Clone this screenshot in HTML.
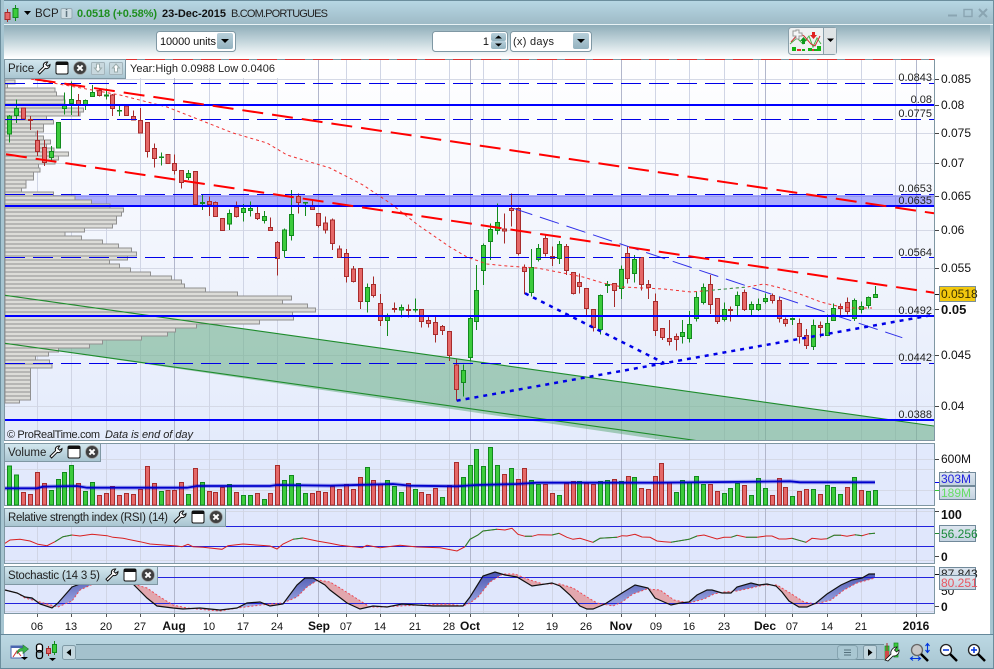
<!DOCTYPE html>
<html><head><meta charset="utf-8"><title>BCP</title>
<style>
html,body{margin:0;padding:0;background:#fff;width:994px;height:669px;overflow:hidden}
svg{display:block;font-family:"Liberation Sans",Arial,sans-serif;font-size:11px;fill:#111}
.rw{stroke:#a52a2a;stroke-width:3;fill:none}
.gw{stroke:#128a1e;stroke-width:3;fill:none}
.rb{stroke:#a82c2c;stroke-width:3;fill:#e56868}
.gb{stroke:#128a1e;stroke-width:3;fill:#3ccb3c}
.c{shape-rendering:crispEdges}
.ax{font-size:12px;fill:#111}
.lb{font-size:11px;text-anchor:end;fill:#222}
.dt{font-size:11px;text-anchor:middle}
.dm{font-size:12px;font-weight:bold;text-anchor:middle}
.tag{fill:url(#tg);stroke:#71899a;stroke-width:1}
</style></head><body>
<svg width="994" height="669" viewBox="0 0 994 669" xmlns="http://www.w3.org/2000/svg">
<defs>
<linearGradient id="tb" x1="0" y1="0" x2="0" y2="1"><stop offset="0" stop-color="#b8d8e5"/><stop offset="1" stop-color="#9db9c5"/></linearGradient>
<linearGradient id="tb2" x1="0" y1="0" x2="0" y2="1"><stop offset="0" stop-color="#8fadb9"/><stop offset=".5" stop-color="#c4d6dc"/><stop offset="1" stop-color="#fff"/></linearGradient>
<linearGradient id="pb" x1="0" y1="0" x2="0" y2="1"><stop offset="0" stop-color="#fff"/><stop offset="1" stop-color="#e4ebfb"/></linearGradient>
<linearGradient id="hd" x1="0" y1="0" x2="0" y2="1"><stop offset="0" stop-color="#d4e8ef"/><stop offset="1" stop-color="#a8c4d0"/></linearGradient>
<linearGradient id="tg" x1="0" y1="0" x2="0" y2="1"><stop offset="0" stop-color="#dde6ef"/><stop offset="1" stop-color="#c3d2e0"/></linearGradient>
<linearGradient id="btn" x1="0" y1="0" x2="0" y2="1"><stop offset="0" stop-color="#b8d0db"/><stop offset="1" stop-color="#93b2bf"/></linearGradient>
<linearGradient id="bt" x1="0" y1="0" x2="0" y2="1"><stop offset="0" stop-color="#bcd8e3"/><stop offset="1" stop-color="#a8c6d2"/></linearGradient>
<linearGradient id="bl" gradientUnits="userSpaceOnUse" x1="0" y1="572" x2="0" y2="610"><stop offset="0" stop-color="#4a55b0"/><stop offset="1" stop-color="#aab4ea"/></linearGradient>
<symbol id="wr" viewBox="0 0 14 14"><path d="M1 11.2L2.6 13L8.2 7.4C10.4 8.2 13 6.6 13 3.6L10.8 5.2L8.9 3.6L10.6 1C7.6 .6 5.6 3.2 6.6 5.6Z" fill="#fff" stroke="#111" stroke-width="1"/></symbol>
<symbol id="wn" viewBox="0 0 14 14"><rect x="1" y="1" width="12" height="12" rx="1.5" fill="#fff" stroke="#111"/><rect x="1" y="1" width="12" height="3" fill="#111"/></symbol>
<symbol id="cl" viewBox="0 0 14 14"><circle cx="7" cy="7" r="6.4" fill="#3f3f3f" stroke="#999" stroke-width=".7"/><path d="M4.4 4.4L9.6 9.6M9.6 4.4L4.4 9.6" stroke="#fff" stroke-width="2"/></symbol>
<clipPath id="pc"><rect x="5" y="60" width="929" height="380"/></clipPath>
<clipPath id="sa"><path d="M5 590L17 593 25 598 40 602 58 607 72 601 80 590 93 584 133 584 147 588 160 597 173 605 187 608 207 610 220 611 237 608 253 606 270 604 283 603 297 597 307 587 318 580 330 582 340 588 370 607 380 607 420 605 447 604 463 606 470 603 478 597 490 582 503 574 515 574 530 580 543 584 560 584 573 588 587 597 597 603 613 606 622 602 633 594 647 589 660 590 674 600 689 603 704 599 714 594 724 592 737 591 751 588 764 585 777 585 790 593 804 602 816 604 831 600 844 590 857 583 875 578 875 560 5 560Z"/></clipPath>
<clipPath id="sb"><path d="M5 590L17 593 25 598 40 602 58 607 72 601 80 590 93 584 133 584 147 588 160 597 173 605 187 608 207 610 220 611 237 608 253 606 270 604 283 603 297 597 307 587 318 580 330 582 340 588 370 607 380 607 420 605 447 604 463 606 470 603 478 597 490 582 503 574 515 574 530 580 543 584 560 584 573 588 587 597 597 603 613 606 622 602 633 594 647 589 660 590 674 600 689 603 704 599 714 594 724 592 737 591 751 588 764 585 777 585 790 593 804 602 816 604 831 600 844 590 857 583 875 578 875 620 5 620Z"/></clipPath>
</defs>

<rect width="994" height="669" fill="#fff"/>
<!-- title bar -->
<rect x="0" y="0" width="994" height="25" fill="url(#tb)"/>
<path d="M0 .5H994" stroke="#6c8e9d"/>
<path d="M0 24.5H994" stroke="#e8f2f5"/>
<rect x="4" y="25" width="986" height="33" fill="url(#tb2)"/>
<rect x="0" y="0" width="4" height="669" fill="#a6c5d1"/>
<rect x="990" y="25" width="4" height="644" fill="#a6c5d1"/>
<path d="M.5 0V669M993.5 0V669" stroke="#6c8e9d"/>

<!-- top left icon -->
<g class="c"><path d="M7.5 9V22" stroke="#a52a2a"/><rect x="5" y="12.5" width="5" height="7" fill="#e56868" stroke="#a52a2a"/>
<path d="M15.5 5V21" stroke="#128a1e"/><rect x="13" y="8.5" width="5" height="9" fill="#3ccb3c" stroke="#128a1e"/></g>
<path d="M24 11H31L27.5 15Z" fill="#000"/>
<text x="35" y="17" font-size="11.5" fill="#222">BCP</text>
<rect x="61" y="8.5" width="11" height="10" rx="1.5" fill="#cfdde3" stroke="#95aab3"/>
<text x="66.5" y="17" font-size="11" font-weight="bold" text-anchor="middle" fill="#5f7480">i</text>
<text x="77" y="17" font-size="11" font-weight="bold" fill="#1f8f1f" textLength="80">0.0518 (+0.58%)</text>
<text x="162" y="17" font-size="11" font-weight="bold" fill="#111" textLength="64">23-Dec-2015</text>
<text x="231" y="17" font-size="11" fill="#222" textLength="97">B.COM.PORTUGUES</text>
<!-- window buttons -->
<path d="M948 15.5H957" stroke="#8aa5b2" stroke-width="2"/>
<rect x="964" y="9.5" width="8" height="7" fill="none" stroke="#8aa5b2" stroke-width="1.4"/>
<path d="M979 9L987 17M987 9L979 17" stroke="#8aa5b2" stroke-width="2"/>

<!-- toolbar controls -->
<rect x="156.5" y="31.5" width="79" height="20" rx="3" fill="#fff" stroke="#7f98a4"/>
<text x="160" y="45" font-size="11" fill="#111" textLength="56">10000 units</text>
<rect x="217" y="33" width="16" height="16" rx="2" fill="url(#btn)"/>
<path d="M221 39H229L225 43Z" fill="#000"/>
<rect x="432.5" y="31.5" width="75" height="20" rx="3" fill="#fff" stroke="#7f98a4"/>
<text x="489" y="45" font-size="11" text-anchor="end">1</text>
<rect x="491" y="33" width="15" height="8" rx="2" fill="url(#btn)"/>
<rect x="491" y="41" width="15" height="8" rx="2" fill="url(#btn)"/>
<path d="M495 38.500H502L498.500 35.500ZM495 43.500H502L498.500 46.500Z" fill="#000"/>
<rect x="510.500" y="31.500" width="81" height="20" rx="3" fill="#fff" stroke="#7f98a4"/>
<text x="513" y="45" font-size="11" fill="#222" textLength="41">(x) days</text>
<rect x="573" y="33" width="16" height="16" rx="2" fill="url(#btn)"/>
<path d="M577 39H585L581 43Z" fill="#000"/>
<!-- add indicator button -->
<rect x="788.500" y="27.500" width="48" height="27" rx="3" fill="#eef1f2" stroke="#8aa0ab"/>
<rect x="823" y="28" width="13" height="26" fill="#dfe4e6"/><path d="M823.500 28V54" stroke="#8aa0ab"/>
<path d="M827 38.500H834L830.500 42Z" fill="#000"/>
<path d="M790 44L797 38 803 44 809 36 813 47 817 38 821 44" fill="none" stroke="#49b349"/>
<path d="M791 42L799 33 804 36 811 44 815 46 820 36" fill="none" stroke="#d03030"/>
<path d="M793 31h3v-1h3v3h3v3h-3v3h-3v-3h-3v-3h0z" fill="#f4f6f7" stroke="#9a9a9a"/>
<path d="M802 44v-3h-2l3.500-4 3.500 4h-2v3z" fill="#0a9a1a"/><path d="M812 32v3h-2l3.500 4 3.500-4h-2v-3z" fill="#e02020"/>
<path d="M792 47h4v4h-4zM802 49h3v2h-3zM808 48h4v3h-4zM814 49h3v2h-3zM817 46h4v5h-4z" fill="#12b312"/><path d="M797 49h4v2h-4zM812 49h2v2h-2z" fill="#e03030"/>

<!-- panels -->
<rect x="4.500" y="59.500" width="930" height="381" fill="url(#pb)" stroke="#7f97a3"/>
<rect x="4.500" y="443.500" width="930" height="62" fill="#e2e9fc" stroke="#7f97a3"/>
<rect x="4.500" y="508.500" width="930" height="55" fill="#e0e7fc" stroke="#7f97a3"/>
<rect x="4.500" y="566.500" width="930" height="47" fill="#e0e7fc" stroke="#7f97a3"/>

<!-- horizontal grid -->
<g class="c" fill="none" stroke="#d5d9e6">
<path d="M5 79.500H934M5 133.500H934M5 163.500H934M5 196.500H934M5 230.500H934M5 268.500H934M5 309.500H934M5 355.500H934M5 406.500H934"/>
<path d="M5 459.500H934M5 469.500H934M5 490.500H934M5 511.500H934M5 560.500H934M5 611.500H934"/>
</g>
<!-- vertical grid -->
<g class="c" fill="none">
<g stroke="#d0d5e5"><path id="vg" d="M37.500 60V440M71.500 60V440M106.500 60V440M140.500 60V440M209.500 60V440M243.500 60V440M277.500 60V440M346.500 60V440M380.500 60V440M415.500 60V440M449.500 60V440M483.500 60V440M518.500 60V440M552.500 60V440M586.500 60V440M655.500 60V440M689.500 60V440M724.500 60V440M758.500 60V440M792.500 60V440M827.500 60V440M861.500 60V440M895.500 60V440"/>
<path d="M37.500 444V505M71.500 444V505M106.500 444V505M140.500 444V505M209.500 444V505M243.500 444V505M277.500 444V505M346.500 444V505M380.500 444V505M415.500 444V505M449.500 444V505M483.500 444V505M518.500 444V505M552.500 444V505M586.500 444V505M655.500 444V505M689.500 444V505M724.500 444V505M758.500 444V505M792.500 444V505M827.500 444V505M861.500 444V505M895.500 444V505M37.500 509V563M71.500 509V563M106.500 509V563M140.500 509V563M209.500 509V563M243.500 509V563M277.500 509V563M346.500 509V563M380.500 509V563M415.500 509V563M449.500 509V563M483.500 509V563M518.500 509V563M552.500 509V563M586.500 509V563M655.500 509V563M689.500 509V563M724.500 509V563M758.500 509V563M792.500 509V563M827.500 509V563M861.500 509V563M895.500 509V563M37.500 567V613M71.500 567V613M106.500 567V613M140.500 567V613M209.500 567V613M243.500 567V613M277.500 567V613M346.500 567V613M380.500 567V613M415.500 567V613M449.500 567V613M483.500 567V613M518.500 567V613M552.500 567V613M586.500 567V613M655.500 567V613M689.500 567V613M724.500 567V613M758.500 567V613M792.500 567V613M827.500 567V613M861.500 567V613M895.500 567V613"/></g>
<path stroke="#b2b7cc" d="M174.500 60V440M318.500 60V440M470.500 60V440M621.500 60V440M765.500 60V440M916.500 60V440M174.500 444V505M318.500 444V505M470.500 444V505M621.500 444V505M765.500 444V505M916.500 444V505M174.500 509V563M318.500 509V563M470.500 509V563M621.500 509V563M765.500 509V563M916.500 509V563M174.500 567V613M318.500 567V613M470.500 567V613M621.500 567V613M765.500 567V613M916.500 567V613"/>
</g>

<!-- channel + zone -->
<g clip-path="url(#pc)">
<path d="M5 295.300L934 426V480L5 343.300Z" fill="#6fb089" fill-opacity=".58"/>
<rect x="5" y="195" width="929" height="11" fill="#0000ff" fill-opacity=".3"/>
</g>

<!-- histogram -->
<g class="c" transform="scale(.33333)" fill="#dcdcd8" stroke="#909090" stroke-width="3">
<path d="M15 240H45V252H15zM15 252H22V264H15zM15 264H165V276H15zM15 276H170V288H15zM15 288H192V300H15zM15 300H195V312H15zM15 312H190V324H15zM15 324H250V336H15zM15 336H240V348H15zM15 348H140V360H15zM15 360H160V372H15zM15 372H130V384H15zM15 384H130V396H15zM15 396H108V408H15zM15 408H130V420H15zM15 420H152V432H15zM15 432H140V444H15zM15 444H162V456H15zM15 456H205V468H15zM15 468H175V480H15zM15 480H165V492H15zM15 492H115V504H15zM15 504H120V516H15zM15 516H100V528H15zM15 528H100V540H15zM15 540H78V552H15zM15 552H78V564H15zM15 564H65V576H15zM15 576H160V588H15zM15 588H225V600H15zM15 600H275V612H15zM15 612H330V624H15zM15 624H370V636H15zM15 636H365V648H15zM15 648H350V660H15zM15 660H350V672H15z"/>
<g transform="translate(0,675)">
<path d="M15 -3H338V9H15zM15 9H253V21H15zM15 21H195V33H15zM15 33H245V45H15zM15 45H308V57H15zM15 57H355V69H15zM15 69H395V81H15zM15 81H410V93H15zM15 93H383V105H15zM15 105H329V117H15zM15 117H358V129H15zM15 129H392V141H15zM15 141H452V153H15zM15 153H515V165H15zM15 165H545V177H15zM15 177H553V189H15zM15 189H617V201H15zM15 201H713V213H15zM15 213H875V225H15zM15 225H848V237H15zM15 237H923V249H15zM15 249H947V261H15zM15 261H878V273H15zM15 273H881V285H15zM15 285H779V297H15zM15 297H590V309H15zM15 309H527V321H15zM15 321H503V333H15zM15 333H425V345H15zM15 345H308V357H15zM15 357H269V369H15zM15 369H175V381H15zM15 381H146V393H15zM15 393H107V405H15zM15 405H149V417H15zM15 417H156V429H15zM15 429H92V441H15zM15 441H92V453H15zM15 453H92V465H15zM15 465H92V477H15zM15 477H92V489H15zM15 489H92V501H15zM15 501H92V513H15zM15 513H92V525H15zM15 525H59V534H15z"/>
</g></g>

<!-- candles -->
<g class="c" transform="scale(.33333) translate(.5 0)">
<path class="gw" d="M28 345V428M49 298V369M154 438V485M175 367V444M193 277V343M214 244V345M256 298V330M277 255V291M319 265V298M358 318V348M484 457V497M565 510V540M607 585V630M688 628V690M730 612V665M751 604V650M793 633V670M853 685V773M874 570V722M916 607V648"/>
<path class="rw" d="M70 322V358M91 348V390M112 391V468M133 420V498M235 282V348M298 265V290M337 282V348M379 318V348M400 331V362M421 324V400M442 366V473M463 430V503M503 463V490M523 463V524M544 512V566M586 513V615M628 590V648M646 604V650M667 655V692M709 605V652M772 618V660M811 652V692M832 723V827M895 580V640M937 600V630M955 640V683M976 650V700"/>
<path class="gb" d="M22 348h12V402h-12zM43 325h12V347h-12zM148 455h12V473h-12zM169 367h12V444h-12zM187 316h12V325h-12zM208 298h12V311h-12zM250 301h12V313h-12zM271 278h12V290h-12zM313 285h12V288h-12zM352 331h12V333h-12zM478 471h12V473h-12zM559 520h12V532h-12zM601 607h12V610h-12zM682 640h12V672h-12zM724 625h12V637h-12zM745 625h12V632h-12zM787 649h12V661h-12zM847 690h12V751h-12zM868 643h12V707h-12zM910 607h12V609h-12z"/>
<path class="rb" d="M64 324h12V357h-12zM85 358h12V361h-12zM106 421h12V455h-12zM127 442h12V488h-12zM229 301h12V315h-12zM292 271h12V286h-12zM331 285h12V325h-12zM373 318h12V347h-12zM394 349h12V360h-12zM415 361h12V399h-12zM436 367h12V455h-12zM457 445h12V476h-12zM497 463h12V490h-12zM517 490h12V512h-12zM538 512h12V548h-12zM580 514h12V614h-12zM622 604h12V614h-12zM640 607h12V650h-12zM661 655h12V692h-12zM703 622h12V650h-12zM766 640h12V655h-12zM805 683h12V692h-12zM826 727h12V775h-12zM889 589h12V607h-12zM931 618h12V628h-12zM949 640h12V677h-12zM970 669h12V690h-12z"/>
</g>
<g class="c" transform="translate(330 225) scale(.33333) translate(.5 0)">
<path class="gw" d="M112 175V263M172 265V333M214 238V278M256 220V263M400 418V515M421 275V410M439 120V315M460 55V180M481 -5V105M502 -65V28M604 72V215M625 57V110M688 48V117M811 208V328M832 168V204M874 122V222M913 90V173"/>
<path class="rw" d="M7 -20V75M28 62V98M49 72V173M70 123V173M91 130V252M130 155V218M151 207V303M193 232V263M235 238V278M274 253V308M295 275V308M316 275V353M337 300V330M358 320V408M379 403V527M523 -35V55M544 -95V5M565 -53V92M583 118V207M646 30V95M667 65V123M709 57V150M730 142V208M748 145V205M769 190V275M790 253V320M853 175V246M892 65V176M934 97V197M955 165V222M976 205V333"/>
<path class="gb" d="M106 187h12V230h-12zM166 275h12V287h-12zM208 247h12V255h-12zM250 253h12V255h-12zM394 436h12V473h-12zM415 280h12V398h-12zM433 196h12V290h-12zM454 61h12V137h-12zM475 13h12V50h-12zM496 -8h12V17h-12zM598 127h12V202h-12zM619 70h12V104h-12zM682 58h12V101h-12zM805 211h12V314h-12zM826 178h12V181h-12zM868 133h12V190h-12zM907 103h12V146h-12z"/>
<path class="rb" d="M1 -15h12V55h-12zM22 72h12V98h-12zM43 85h12V155h-12zM64 132h12V170h-12zM85 130h12V230h-12zM124 178h12V212h-12zM145 235h12V287h-12zM187 250h12V254h-12zM229 253h12V257h-12zM268 253h12V290h-12zM289 286h12V296h-12zM310 292h12V329h-12zM331 304h12V317h-12zM352 320h12V392h-12zM373 420h12V494h-12zM517 12h12V18h-12zM538 -50h12V-43h-12zM559 -50h12V85h-12zM577 127h12V140h-12zM640 40h12V86h-12zM661 94h12V100h-12zM703 64h12V137h-12zM724 142h12V205h-12zM742 172h12V185h-12zM763 190h12V250h-12zM784 253h12V308h-12zM847 175h12V197h-12zM886 85h12V160h-12zM928 97h12V178h-12zM949 178h12V187h-12zM970 229h12V317h-12z"/>
</g>
<g class="c" transform="translate(664 225) scale(.33333) translate(.5 0)">
<path class="gw" d="M55 285V355M76 258V352M97 200V290M118 175V238M181 232V290M220 200V270M262 230V270M283 220V258M304 205V235M385 278V300M448 283V375M490 268V332M508 235V288M571 220V288M592 230V265M613 215V250M634 183V218"/>
<path class="rw" d="M-5 310V345M16 285V362M37 325V377M139 150V267M160 220V297M199 245V290M241 193V258M325 205V236M346 215V292M364 278V304M406 280V356M427 312V372M469 290V338M529 235V270M550 217V268"/>
<path class="gb" d="M49 322h12V334h-12zM70 298h12V341h-12zM91 217h12V281h-12zM112 187h12V232h-12zM175 253h12V284h-12zM214 211h12V241h-12zM256 238h12V254h-12zM277 238h12V254h-12zM298 220h12V230h-12zM379 281h12V283h-12zM442 301h12V365h-12zM484 295h12V332h-12zM502 250h12V287h-12zM565 226h12V280h-12zM586 244h12V253h-12zM607 217h12V242h-12zM628 208h12V218h-12z"/>
<path class="rb" d="M-11 310h12V338h-12zM10 340h12V350h-12zM31 334h12V344h-12zM133 178h12V238h-12zM154 220h12V290h-12zM193 253h12V256h-12zM235 202h12V254h-12zM319 211h12V226h-12zM340 226h12V280h-12zM358 283h12V296h-12zM400 295h12V334h-12zM421 331h12V361h-12zM463 301h12V307h-12zM523 244h12V250h-12zM544 232h12V260h-12z"/>
</g>

<!-- price overlays -->
<g clip-path="url(#pc)" fill="none">
<path d="M5 295.300L934 426M5 343.300L934 474" stroke="#1e8c2c" stroke-width="1.100"/>
<path d="M25 78L120 95 167 107 200 120 233 133 267 143 287 155 330 168 363 185 390 203 418 225 450 247 467 257 487 264 507 266 537 268 563 273 583 277 603 283 622 287 643 288 664 289 691 292 714 290 747 287 764 284 777 287 797 293 821 302 841 307 854 308 872 308" stroke="#f03030" stroke-dasharray="3 3"/>
<path d="M706 291L714 290 747 287" stroke="#2aa050" stroke-dasharray="3 3"/>
<path d="M513.300 208.300L902.300 337.700" stroke="#3030e8" stroke-dasharray="20 8"/>
<path d="M525 293.300L664 363" stroke="#0000e6" stroke-width="2.500" stroke-dasharray="4 5"/>
<path d="M456.700 400.700L664 363.300 934 314.700" stroke="#0000e6" stroke-width="2.500" stroke-dasharray="4 5"/>
<g class="c">
<path d="M5 105H934M5 206H934M5 316H934M5 420H934" stroke="#0000ff" stroke-width="2"/>
<path d="M5 83.500H934M5 119.500H934M5 194.500H934M5 257.500H934M5 363.500H934" stroke="#0000e8" stroke-dasharray="20 8"/>
</g>
<path d="M6 154.300L934 292.700M5 74.800L934 213.300" stroke="#ff0000" stroke-width="2" stroke-dasharray="21 9"/>
</g>
<path class="c" d="M5 59.500H934" stroke="#e03030" stroke-dasharray="20 8"/>

<!-- labels on price -->
<text class="lb" x="932" y="81">0.0843</text>
<text class="lb" x="932" y="103">0.08</text>
<text class="lb" x="932" y="117">0.0775</text>
<text class="lb" x="932" y="192">0.0653</text>
<text class="lb" x="932" y="204">0.0635</text>
<text class="lb" x="932" y="256">0.0564</text>
<text class="lb" x="932" y="314">0.0492</text>
<text class="lb" x="932" y="361">0.0442</text>
<text class="lb" x="932" y="418">0.0388</text>
<text x="7" y="438" font-size="11" fill="#222" textLength="93">© ProRealTime.com</text>
<text x="105" y="438" font-size="11" font-style="italic" fill="#222" textLength="88">Data is end of day</text>

<!-- Price header -->
<rect x="4.500" y="59.500" width="121" height="19" fill="url(#hd)" stroke="#7f97a3"/>
<rect x="126" y="60" width="152" height="18" fill="#fff"/>
<text x="8" y="72" font-size="11.500" fill="#222">Price</text>
<use href="#wr" x="37" y="61" width="14" height="14"/><use href="#wn" x="55" y="61" width="14" height="14"/><use href="#cl" x="73" y="61" width="14" height="14"/>
<rect x="91.500" y="62.500" width="13" height="12" rx="1" fill="#c8d8de" stroke="#a3b4bb"/><path d="M96.500 64h3v4h2l-3.500 4-3.500-4h2z" fill="#fff" stroke="#9aa"/>
<rect x="109.500" y="62.500" width="13" height="12" rx="1" fill="#c8d8de" stroke="#a3b4bb"/><path d="M114.500 72h3v-4h2l-3.500-4-3.500 4h2z" fill="#fff" stroke="#9aa"/>
<text x="130" y="72" font-size="11" fill="#222" textLength="145">Year:High 0.0988 Low 0.0406</text>

<!-- Volume bars -->
<g class="c" transform="translate(0 440) scale(.33333) translate(.5 0)">
<path class="gb" d="M22 78h12V195h-12zM43 105h12V195h-12zM148 151h12V195h-12zM169 118h12V195h-12zM187 97h12V195h-12zM208 76h12V195h-12zM250 154h12V195h-12zM271 127h12V195h-12zM478 154h12V195h-12zM559 163h12V195h-12zM601 127h12V195h-12zM682 133h12V195h-12zM724 166h12V195h-12zM745 166h12V195h-12zM787 178h12V195h-12zM847 121h12V195h-12zM868 106h12V195h-12zM889 130h12V195h-12zM910 160h12V195h-12z"/>
<path class="rb" d="M64 157h12V195h-12zM85 163h12V195h-12zM106 97h12V195h-12zM127 130h12V195h-12zM229 130h12V195h-12zM292 166h12V195h-12zM313 160h12V195h-12zM331 139h12V195h-12zM352 166h12V195h-12zM373 160h12V195h-12zM394 163h12V195h-12zM415 148h12V195h-12zM436 79h12V195h-12zM457 130h12V195h-12zM497 151h12V195h-12zM517 151h12V195h-12zM538 127h12V195h-12zM580 85h12V195h-12zM622 154h12V195h-12zM640 157h12V195h-12zM661 142h12V195h-12zM703 157h12V195h-12zM766 160h12V195h-12zM805 160h12V195h-12zM826 76h12V195h-12zM931 160h12V195h-12zM949 154h12V195h-12zM970 157h12V195h-12z"/>
</g>
<g class="c" transform="translate(330 440) scale(.33333) translate(.5 0)">
<path class="gb" d="M106 82h12V195h-12zM166 121h12V195h-12zM187 139h12V195h-12zM208 157h12V195h-12zM250 148h12V195h-12zM331 172h12V195h-12zM394 112h12V195h-12zM415 76h12V195h-12zM433 28h12V195h-12zM454 79h12V195h-12zM475 22h12V195h-12zM496 76h12V195h-12zM538 85h12V195h-12zM598 121h12V195h-12zM619 133h12V195h-12zM682 166h12V195h-12zM742 124h12V195h-12zM805 124h12V195h-12zM826 121h12V195h-12zM868 124h12V195h-12zM907 112h12V195h-12z"/>
<path class="rb" d="M1 139h12V195h-12zM22 148h12V195h-12zM43 133h12V195h-12zM64 148h12V195h-12zM85 112h12V195h-12zM124 121h12V195h-12zM145 133h12V195h-12zM229 130h12V195h-12zM268 157h12V195h-12zM289 163h12V195h-12zM310 145h12V195h-12zM352 136h12V195h-12zM373 67h12V195h-12zM517 103h12V195h-12zM559 118h12V195h-12zM577 85h12V195h-12zM640 133h12V195h-12zM661 160h12V195h-12zM703 130h12V195h-12zM724 124h12V195h-12zM763 130h12V195h-12zM784 133h12V195h-12zM847 118h12V195h-12zM889 109h12V195h-12zM928 145h12V195h-12zM949 148h12V195h-12zM970 109h12V195h-12z"/>
</g>
<g class="c" transform="translate(664 440) scale(.33333) translate(.5 0)">
<path class="gb" d="M31 157h12V195h-12zM49 121h12V195h-12zM70 127h12V195h-12zM91 109h12V195h-12zM112 133h12V195h-12zM175 160h12V195h-12zM193 145h12V195h-12zM214 130h12V195h-12zM256 166h12V195h-12zM277 115h12V195h-12zM298 145h12V195h-12zM379 169h12V195h-12zM442 148h12V195h-12zM484 136h12V195h-12zM502 142h12V195h-12zM523 163h12V195h-12zM565 112h12V195h-12zM607 154h12V195h-12zM628 151h12V195h-12z"/>
<path class="rb" d="M-14 70h12V195h-12zM10 127h12V195h-12zM133 133h12V195h-12zM154 154h12V195h-12zM235 136h12V195h-12zM319 166h12V195h-12zM340 115h12V195h-12zM358 142h12V195h-12zM400 154h12V195h-12zM421 148h12V195h-12zM463 163h12V195h-12zM544 142h12V195h-12zM586 151h12V195h-12z"/>
</g>
<!-- Volume MA -->
<g fill="none" stroke="#0000cc">
<path id="vm" stroke-width="4" stroke-opacity=".3" d="M5 488.300L37 488.300 43 486.700 77 486 87 487.700 187 487.700 197 486 270 486 277 485 330 485.700 393 484 410 485.700 457 486.300 477 485 517 484 537 482.700 660 482.700 790 481.300 800 482.300 875 482.300"/>
<path stroke-width="1.800" d="M5 488.300L37 488.300 43 486.700 77 486 87 487.700 187 487.700 197 486 270 486 277 485 330 485.700 393 484 410 485.700 457 486.300 477 485 517 484 537 482.700 660 482.700 790 481.300 800 482.300 875 482.300"/>
</g>
<rect x="4.500" y="443.500" width="96" height="18" fill="url(#hd)" stroke="#7f97a3"/>
<text x="8" y="456" font-size="11.500" fill="#222">Volume</text>
<use href="#wr" x="49" y="445" width="14" height="14"/><use href="#wn" x="67" y="445" width="14" height="14"/><use href="#cl" x="85" y="445" width="14" height="14"/>

<!-- RSI -->
<path class="c" d="M226 526.500H934M5 546.500H934" stroke="#2222dd" fill="none"/>
<path fill="none" stroke="#d82020" stroke-width="1" d="M5 543.300L10 540 20 539.300 30 541 38 544.300 47 545.700 55 541.700 63 536.700 72 535 80 536 92 534.300 107 535.700 113 537.300 123 538.300 140 541.700 150 544 160 544.700 177 546 182 546.700 188 544.300 193 546.700 203 547.300 222 549.300 228 545.700 243 544 260 545.300 270 546 277 549 283 544 293 539.300 303 538 317 541 330 543.300 340 545.300 362 547.700 367 545.300 380 547.700 400 545.300 417 547 440 547.700 457 551 465 546.700 470 539.300 478 535 483 531 497 529.300 505 530 512 528.300 518 534.300 525 536.300 532 536.300 538 534.700 552 535 559 533.300 567 537.300 573 539.300 580 538.300 593 542.300 600 538.300 617 537.300 622 535.700 627 536 635 534.300 642 537 650 537.300 657 541 664 541.700 671 542.300 689 539.300 697 536 704 535 717 539 724 537.300 731 537.300 737 535.300 746 537.300 757 537.300 766 536 772 536 779 539 786 539 792 538.300 806 542.300 812 538.300 821 539.300 827 538.700 834 535.300 841 535.300 847 536.300 855 534.700 862 535.700 869 533.700 875 533.300"/>
<path fill="none" stroke="#1f8a30" stroke-width="1" d="M55 541.700L63 536.700 72 535M293 539.300L303 538M465 546.700L470 539.300 478 535 483 531 497 529.300M525 536.300L532 536.300M552 535L559 533.300M593 542.300L600 538.300 617 537.300M671 542.300L689 539.300 697 536M731 537.300L737 535.300M746 537.300L757 537.300M792 538.300L806 542.300M827 538.700L834 535.300 841 535.300M855 534.700L862 535.700M869 533.700L875 533.300"/>
<rect x="4.500" y="508.500" width="221" height="18" fill="url(#hd)" stroke="#7f97a3"/>
<text x="8" y="521" font-size="11.500" fill="#222" textLength="160">Relative strength index (RSI) (14)</text>
<use href="#wr" x="173" y="510" width="14" height="14"/><use href="#wn" x="191" y="510" width="14" height="14"/><use href="#cl" x="209" y="510" width="14" height="14"/>

<!-- Stochastic -->
<path clip-path="url(#sa)" fill="url(#bl)" d="M5 590L17 593 25 597 32 598 40 604 52 608 58 603 72 587 80 584 133 584 137 588 147 598 157 606 173 608 183 609 200 608 220 610 237 608 247 603 260 602 270 606 283 604 297 585 305 578 313 578 325 585 330 590 347 603 360 609 373 606 387 607 402 604 417 605 433 606 463 606 470 597 483 576 495 572 505 575 517 577 532 586 552 583 560 586 570 595 580 606 587 609 593 609 605 604 622 593 635 585 648 588 655 598 664 602 671 605 680 603 689 602 697 595 707 590 712 590 722 593 731 593 737 587 751 583 759 585 767 584 776 586 782 592 789 601 799 607 807 607 816 603 827 594 841 585 852 580 862 578 869 574 875 574V578L857 583 844 590 831 600 816 604 804 602 790 593 777 585 764 585 751 588 737 591 724 592 714 594 704 599 689 603 674 600 660 590 647 589 633 594 622 602 613 606 597 603 587 597 573 588 560 584 543 584 530 580 515 574 503 574 490 582 478 597 470 603 463 606 447 604 420 605 380 607 370 607 340 588 330 582 318 580 307 587 297 597 283 603 270 604 253 606 237 608 220 611 207 610 187 608 173 605 160 597 147 588 133 584 93 584 80 590 72 601 58 607 40 602 25 598 17 593 5 590Z"/>
<path clip-path="url(#sb)" fill="#e2a7ae" d="M5 590L17 593 25 597 32 598 40 604 52 608 58 603 72 587 80 584 133 584 137 588 147 598 157 606 173 608 183 609 200 608 220 610 237 608 247 603 260 602 270 606 283 604 297 585 305 578 313 578 325 585 330 590 347 603 360 609 373 606 387 607 402 604 417 605 433 606 463 606 470 597 483 576 495 572 505 575 517 577 532 586 552 583 560 586 570 595 580 606 587 609 593 609 605 604 622 593 635 585 648 588 655 598 664 602 671 605 680 603 689 602 697 595 707 590 712 590 722 593 731 593 737 587 751 583 759 585 767 584 776 586 782 592 789 601 799 607 807 607 816 603 827 594 841 585 852 580 862 578 869 574 875 574V578L857 583 844 590 831 600 816 604 804 602 790 593 777 585 764 585 751 588 737 591 724 592 714 594 704 599 689 603 674 600 660 590 647 589 633 594 622 602 613 606 597 603 587 597 573 588 560 584 543 584 530 580 515 574 503 574 490 582 478 597 470 603 463 606 447 604 420 605 380 607 370 607 340 588 330 582 318 580 307 587 297 597 283 603 270 604 253 606 237 608 220 611 207 610 187 608 173 605 160 597 147 588 133 584 93 584 80 590 72 601 58 607 40 602 25 598 17 593 5 590Z"/>
<path class="c" d="M5 577.500H934M5 603.500H934" stroke="#2222dd" fill="none"/>
<path fill="none" stroke="#ee4a55" stroke-dasharray="2 2" d="M5 590L17 593 25 598 40 602 58 607 72 601 80 590 93 584 133 584 147 588 160 597 173 605 187 608 207 610 220 611 237 608 253 606 270 604 283 603 297 597 307 587 318 580 330 582 340 588 370 607 380 607 420 605 447 604 463 606 470 603 478 597 490 582 503 574 515 574 530 580 543 584 560 584 573 588 587 597 597 603 613 606 622 602 633 594 647 589 660 590 674 600 689 603 704 599 714 594 724 592 737 591 751 588 764 585 777 585 790 593 804 602 816 604 831 600 844 590 857 583 875 578"/>
<path fill="none" stroke="#111" stroke-width="1.200" d="M5 590L17 593 25 597 32 598 40 604 52 608 58 603 72 587 80 584 133 584 137 588 147 598 157 606 173 608 183 609 200 608 220 610 237 608 247 603 260 602 270 606 283 604 297 585 305 578 313 578 325 585 330 590 347 603 360 609 373 606 387 607 402 604 417 605 433 606 463 606 470 597 483 576 495 572 505 575 517 577 532 586 552 583 560 586 570 595 580 606 587 609 593 609 605 604 622 593 635 585 648 588 655 598 664 602 671 605 680 603 689 602 697 595 707 590 712 590 722 593 731 593 737 587 751 583 759 585 767 584 776 586 782 592 789 601 799 607 807 607 816 603 827 594 841 585 852 580 862 578 869 574 875 574"/>
<rect x="4.500" y="566.500" width="153" height="18" fill="url(#hd)" stroke="#7f97a3"/>
<text x="8" y="579" font-size="11.500" fill="#222" textLength="92">Stochastic (14 3 5)</text>
<use href="#wr" x="105" y="568" width="14" height="14"/><use href="#wn" x="123" y="568" width="14" height="14"/><use href="#cl" x="141" y="568" width="14" height="14"/>

<!-- Axis ticks -->
<path class="c" fill="none" stroke="#444" d="M935 79.500H939M935 105.500H939M935 133.500H939M935 163.500H939M935 196.500H939M935 230.500H939M935 268.500H939M935 309.500H939M935 355.500H939M935 406.500H939M935 459.500H939M935 511.500H939M935 556.500H939M935 606.500H939"/>
<g class="ax">
<text x="941" y="83">0.085</text><text x="941" y="109">0.08</text><text x="941" y="137">0.075</text><text x="941" y="167">0.07</text><text x="941" y="200">0.065</text><text x="941" y="234">0.06</text><text x="941" y="272">0.055</text>
<text x="941" y="314" font-size="13" font-weight="bold">0.05</text>
<text x="941" y="359">0.045</text><text x="941" y="410">0.04</text>
<text x="941" y="463">600M</text><text x="941" y="480">400M</text>
<text x="941" y="519" font-weight="bold" font-size="12.500">100</text><text x="941" y="561" font-weight="bold">0</text>
<text x="941" y="577">100</text><text x="941" y="595">50</text><text x="941" y="611" font-weight="bold">0</text>
</g>
<!-- Tags -->
<path class="c" stroke="#0000ee" d="M935 482.500H939"/>
<path class="c" stroke="#33cc33" d="M935 490.500H939"/>
<path class="c" stroke="#1f8a30" d="M935 533.500H939"/>
<path class="c" stroke="#111" d="M935 574.500H939"/>
<rect x="939.500" y="286.500" width="36" height="15" fill="#f2c80e" stroke="#7b8f99"/>
<path class="c" stroke="#111" d="M935 294.500H939"/>
<text x="941" y="298" font-size="12" fill="#3a3000">0.0518</text>
<rect class="tag" x="939.500" y="472.500" width="36" height="13"/><text x="941" y="483" font-size="12" fill="#2222dd">303M</text>
<rect class="tag" x="939.500" y="486.500" width="36" height="13"/><text x="941" y="497" font-size="12" fill="#66dd66">189M</text>
<rect class="tag" x="939.500" y="525.500" width="36" height="16" /><text x="941" y="538" font-size="12" fill="#1a8a3a">56.256</text>
<rect class="tag" x="939.500" y="567.500" width="36" height="14"/><text x="941" y="578" font-size="12" fill="#222">87.843</text>
<rect class="tag" x="939.500" y="575.500" width="36" height="14"/><text x="941" y="587" font-size="12" fill="#e85560">80.251</text>

<!-- date axis -->
<path class="c" fill="none" stroke="#555" d="M37.500 614V617M71.500 614V617M106.500 614V617M140.500 614V617M174.500 614V617M209.500 614V617M243.500 614V617M277.500 614V617M318.500 614V617M346.500 614V617M380.500 614V617M415.500 614V617M449.500 614V617M470.500 614V617M518.500 614V617M552.500 614V617M586.500 614V617M621.500 614V617M655.500 614V617M689.500 614V617M724.500 614V617M765.500 614V617M792.500 614V617M827.500 614V617M861.500 614V617M916.500 614V617"/>
<text class="dt" x="37" y="630">06</text><text class="dt" x="71" y="630">13</text><text class="dt" x="106" y="630">20</text><text class="dt" x="140" y="630">27</text><text class="dm" x="174" y="630">Aug</text><text class="dt" x="209" y="630">10</text><text class="dt" x="243" y="630">17</text><text class="dt" x="277" y="630">24</text><text class="dm" x="319" y="630">Sep</text><text class="dt" x="346" y="630">07</text><text class="dt" x="380" y="630">14</text><text class="dt" x="415" y="630">21</text><text class="dt" x="449" y="630">28</text><text class="dm" x="470" y="630">Oct</text><text class="dt" x="518" y="630">12</text><text class="dt" x="552" y="630">19</text><text class="dt" x="586" y="630">26</text><text class="dm" x="621" y="630">Nov</text><text class="dt" x="656" y="630">09</text><text class="dt" x="689" y="630">16</text><text class="dt" x="724" y="630">23</text><text class="dm" x="765" y="630">Dec</text><text class="dt" x="792" y="630">07</text><text class="dt" x="827" y="630">14</text><text class="dt" x="861" y="630">21</text><text class="dm" x="916" y="630">2016</text>

<!-- bottom bar -->
<rect x="1" y="635" width="992" height="33" fill="url(#bt)"/>
<path class="c" d="M0 634.500H994M0 668.500H994" stroke="#65889a"/>
<rect x="76" y="644" width="808" height="16" fill="#a4c1cd"/>
<path class="c" d="M76 644.500H884M76 659.500H884" stroke="#6f8f9b"/>
<rect x="62.500" y="645.500" width="13" height="14" rx="2" fill="#c3d7df" stroke="#7f9aa6"/><path d="M71 649V656L66.500 652.500Z" fill="#000"/>
<rect x="837.500" y="645.500" width="20" height="14" rx="3" fill="#a9c7d2" stroke="#86a4b0"/><path d="M844 650h7M844 652.500h7M844 655h7" stroke="#55707c"/>
<rect x="863.500" y="645.500" width="13" height="14" rx="2" fill="#c3d7df" stroke="#7f9aa6"/><path d="M868 649V656L872.500 652.500Z" fill="#000"/>
<!-- bottom icons -->
<rect x="11" y="646" width="13" height="12" fill="#fff" stroke="#4a66b0"/><path d="M11 646H24V648H11Z" fill="#4a66b0"/>
<path d="M13 657L17 651 21 656" stroke="#d03030" fill="none"/>
<path d="M17 654C17 649 21 648 23 648V645L28.500 649 23 653.500V651C20 651 18 652 17 654Z" fill="#39b54a" stroke="#2a7a35" stroke-width=".6"/>
<path d="M21 657H28L24.500 660Z" fill="#000"/>
<rect x="36.500" y="644" width="6" height="8" rx="2.500" fill="#fff" stroke="#000" stroke-width="1.300"/><rect x="36.500" y="650.500" width="6" height="8" rx="2.500" fill="none" stroke="#000" stroke-width="1.300"/>
<path d="M48.500 646V656" stroke="#a52a2a"/><rect x="46.500" y="648.500" width="4" height="5" fill="#e56868" stroke="#a52a2a"/>
<path d="M54.500 641V655" stroke="#128a1e"/><rect x="52.500" y="644.500" width="4" height="8" fill="#3ccb3c" stroke="#128a1e"/>
<path d="M49 658H56L52.500 661Z" fill="#000"/>
<rect x="885" y="646" width="4" height="14" fill="#3ccb3c" stroke="#128a1e" stroke-width=".7"/><path d="M887 643V661" stroke="#a52a2a"/>
<rect x="894" y="643" width="4" height="14" fill="#3ccb3c" stroke="#128a1e" stroke-width=".7"/>
<rect x="885" y="651" width="4" height="9" fill="#d04848"/>
<path d="M885 660L891 654C890 651 893 647 897 647L894.500 650L896.500 652L899 650C899.500 654 896 656.500 893 656L888 661Z" fill="#fff" stroke="#111" stroke-width=".8"/>
<circle cx="917" cy="650" r="5.500" fill="#c8c8c8" stroke="#666" stroke-width="1.300"/><path d="M921 654L928 661" stroke="#000" stroke-width="2.500"/>
<path d="M927.500 644V652M925.500 646L927.500 643.500 929.500 646M925.500 650L927.500 652.500 929.500 650M911 658.500H920M913 656.500L910.500 658.500 913 660.500M918 656.500L920.500 658.500 918 660.500" stroke="#0033dd" fill="none" stroke-width="1.100"/>
<circle cx="946" cy="650" r="5.500" fill="#fff" stroke="#222" stroke-width="1.300"/><path d="M950 654L957 661" stroke="#000" stroke-width="2.500"/><path d="M943 650H949" stroke="#0033dd" stroke-width="1.500"/>
<circle cx="974" cy="650" r="5.500" fill="#fff" stroke="#222" stroke-width="1.300"/><path d="M978 654L985 661" stroke="#000" stroke-width="2.500"/><path d="M971 650H977M974 647V653" stroke="#0033dd" stroke-width="1.500"/>
</svg>
</body></html>
